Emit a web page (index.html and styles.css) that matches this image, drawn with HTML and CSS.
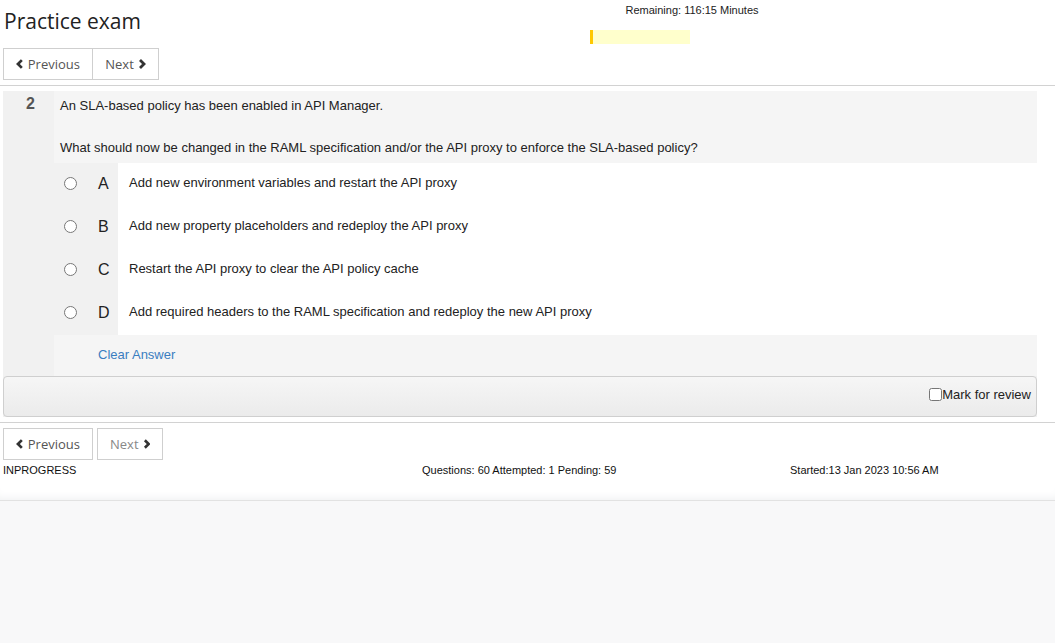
FILE: index.html
```html
<!DOCTYPE html>
<html>
<head>
<meta charset="utf-8">
<title>Practice exam</title>
<link rel="stylesheet" href="styles.css">
</head>
<body>
<div class="page">
  <header class="top">
    <div class="top-row">
      <h1 class="title">Practice exam</h1>
      <div class="timer">
        <div class="timer-text">Remaining: 116:15 Minutes</div>
        <div class="progress"><div class="progress-fill"></div></div>
      </div>
    </div>
    <div class="btn-group">
      <button class="btn btn-joined"><svg class="chev" viewBox="0 0 8 10"><polyline points="6,1 2,5 6,9"/></svg>Previous</button>
      <button class="btn btn-joined btn-right">Next<svg class="chev chev-r" viewBox="0 0 8 10"><polyline points="2,1 6,5 2,9"/></svg></button>
    </div>
  </header>

  <main class="question">
    <div class="q-row">
      <div class="q-num">2</div>
      <div class="q-text">An SLA-based policy has been enabled in API Manager.<br><br>What should now be changed in the RAML specification and/or the API proxy to enforce the SLA-based policy?</div>
    </div>
    <div class="opt">
      <div class="opt-left"><input type="radio" name="ans" class="radio"><span class="letter">A</span></div>
      <div class="opt-text">Add new environment variables and restart the API proxy</div>
    </div>
    <div class="opt">
      <div class="opt-left"><input type="radio" name="ans" class="radio"><span class="letter">B</span></div>
      <div class="opt-text">Add new property placeholders and redeploy the API proxy</div>
    </div>
    <div class="opt">
      <div class="opt-left"><input type="radio" name="ans" class="radio"><span class="letter">C</span></div>
      <div class="opt-text">Restart the API proxy to clear the API policy cache</div>
    </div>
    <div class="opt">
      <div class="opt-left"><input type="radio" name="ans" class="radio"><span class="letter">D</span></div>
      <div class="opt-text">Add required headers to the RAML specification and redeploy the new API proxy</div>
    </div>
    <div class="clear-row">
      <div class="clear-left"></div>
      <div class="clear-cell"><a class="clear-link">Clear Answer</a></div>
    </div>
    <div class="review">
      <label class="review-label"><input type="checkbox" class="check">Mark for review</label>
    </div>
  </main>

  <section class="bottom">
    <div class="btn-row">
      <button class="btn"><svg class="chev" viewBox="0 0 8 10"><polyline points="6,1 2,5 6,9"/></svg>Previous</button>
      <button class="btn btn-disabled">Next<svg class="chev chev-r" viewBox="0 0 8 10"><polyline points="2,1 6,5 2,9"/></svg></button>
    </div>
    <div class="status">
      <div>INPROGRESS</div>
      <div>Questions: 60 Attempted: 1 Pending: 59</div>
      <div>Started:13 Jan 2023 10:56 AM</div>
    </div>
  </section>
</div>
<div class="footer-space"></div>
</body>
</html>
```

FILE: styles.css
```css
html, body {
  margin: 0;
  padding: 0;
  background: #f8f8f9;
  font-family: "Liberation Sans", Arial, sans-serif;
  font-size: 13px;
  color: #222;
}

.page {
  background: #fff;
  border-bottom: 1px solid #e2e2e2;
  box-shadow: 0 -8px 8px -6px #f0f1f3 inset;
  padding-bottom: 23px;
}

.top {
  border-bottom: 1px solid #d2d2d2;
  padding: 0 0 5px 3px;
}

.top-row {
  display: flex;
  height: 48px;
}

.title {
  margin: 0;
  padding: 6px 0 0 1px;
  font-family: "Open Sans", sans-serif;
  font-weight: 400;
  font-size: 21px;
  line-height: 30px;
  color: #222;
  width: 586px;
}

.timer {
  width: 204px;
  padding-top: 4px;
}

.timer-text {
  text-align: center;
  font-size: 11px;
  line-height: 13px;
  color: #222;
}

.progress {
  margin-top: 13px;
  width: 100px;
  height: 14px;
  background: #ffffcc;
}

.progress-fill {
  width: 3px;
  height: 100%;
  background: #ffc800;
}

.btn-group {
  display: flex;
}

.btn {
  display: flex;
  align-items: center;
  justify-content: center;
  gap: 4px;
  height: 32px;
  padding: 0 12px;
  background: #fff;
  border: 1px solid #cfcfcf;
  font-family: "Open Sans", sans-serif;
  font-size: 13px;
  color: #555;
  cursor: pointer;
}

.btn-group .btn:first-child {
  width: 90px;
}

.btn-right {
  border-left: none;
  width: 66px;
}

.chev {
  width: 8px;
  height: 10px;
  fill: none;
  stroke: #333;
  stroke-width: 2.8;
}

.question {
  margin: 5px 18px 0 3px;
  background: #f1f1f1;
}

.q-row {
  display: grid;
  grid-template-columns: 51px 1fr;
}

.q-num {
  text-align: center;
  font-size: 16px;
  font-weight: bold;
  color: #555;
  padding-top: 4px;
  padding-left: 4px;
}

.q-text {
  background: #f5f5f5;
  padding: 4px 6px 5px 6px;
  line-height: 21px;
}

.opt {
  display: grid;
  grid-template-columns: 115px 1fr;
  height: 43px;
}

.opt-left {
  display: flex;
  align-items: center;
  padding-bottom: 2px;
}

.radio {
  margin: 0 0 0 61px;
  width: 13px;
  height: 13px;
}

.letter {
  margin-left: 21px;
  font-size: 16px;
  color: #222;
}

.opt-text {
  background: #fff;
  padding: 12px 0 0 11px;
  line-height: 15px;
}

.clear-row {
  display: grid;
  grid-template-columns: 51px 1fr;
  height: 41px;
}

.clear-cell {
  background: #f5f5f5;
  display: flex;
  align-items: center;
  padding-left: 44px;
  padding-bottom: 2px;
}

.clear-link {
  color: #3a7dc0;
  cursor: pointer;
}

.review {
  border: 1px solid #cfcfcf;
  border-radius: 4px;
  background: linear-gradient(#f6f6f6, #ebebeb);
  display: flex;
  justify-content: flex-end;
  align-items: center;
  padding-right: 5px;
  padding-bottom: 4px;
  box-sizing: border-box;
  height: 41px;
}

.review-label {
  display: flex;
  align-items: center;
  color: #222;
}

.check {
  margin: 0;
  width: 13px;
  height: 13px;
}

.bottom {
  margin-top: 5px;
  border-top: 1px solid #d2d2d2;
  padding: 5px 0 0 3px;
}

.btn-row {
  display: flex;
  gap: 4px;
}

.btn-row .btn:first-child {
  width: 90px;
}

.btn-disabled {
  width: 66px;
  color: #888;
}

.status {
  display: grid;
  grid-template-columns: 419px 368px 1fr;
  font-size: 11px;
  line-height: 13px;
  color: #111;
  margin-top: 4px;
}

.footer-space {
  height: 140px;
}
```
